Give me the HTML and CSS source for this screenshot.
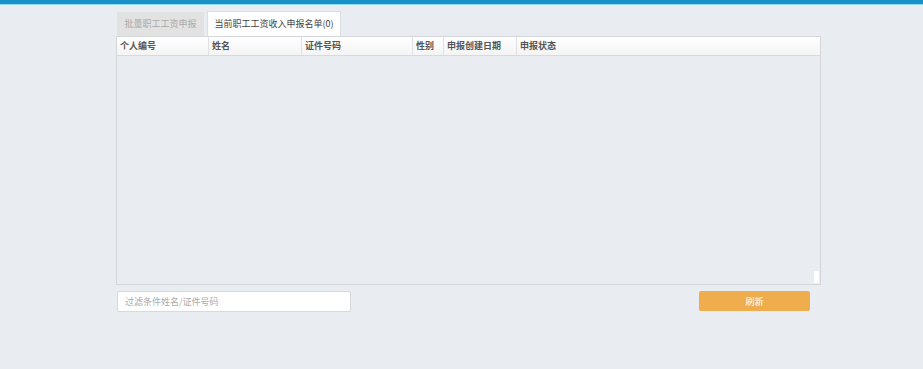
FILE: index.html
```html
<!DOCTYPE html>
<html lang="zh-CN">
<head>
  <meta charset="UTF-8" />
  <title>职工工资申报</title>
  <link rel="stylesheet" href="styles.css">
</head>
<body>
  <div class="topbar"></div>
  <div class="wrap">
    <div class="tabs">
      <div class="tab">批量职工工资申报</div>
      <div class="tab active">当前职工工资收入申报名单(0)</div>
    </div>
    <div class="grid">
      <div class="grid-head">
        <div class="col c1">个人编号</div>
        <div class="col c2">姓名</div>
        <div class="col c3">证件号码</div>
        <div class="col c4">性别</div>
        <div class="col c5">申报创建日期</div>
        <div class="col c6">申报状态</div>
      </div>
      <div class="grid-body">
        <div class="scroll-thumb"></div>
      </div>
    </div>
    <div class="footer">
      <input type="text" class="filter" placeholder="过滤条件姓名/证件号码" />
      <button class="btn">刷新</button>
    </div>
  </div>
</body>
</html>
```

FILE: styles.css
```css
body {
  margin: 0;
  background: #e9ecf0;
  font-family: "Noto Sans CJK SC", "Noto Sans", sans-serif;
  font-size: 9px;
  color: #333;
}

.topbar {
  height: 4px;
  background: #1791c6;
  border-bottom: 1px solid #8fdcf2;
}

.wrap {
  margin-left: 116px;
  width: 705px;
  padding-top: 5px;
}

.tabs {
  display: flex;
  align-items: flex-end;
  height: 26px;
}

.tab {
  width: 87px;
  height: 24px;
  margin-left: 1px;
  margin-right: 3px;
  background: #e2e2e2;
  color: #aaa;
  line-height: 24px;
  text-align: center;
}

.tab.active {
  width: 132px;
  height: 24px;
  margin-left: 0;
  line-height: 24px;
  background: #fff;
  color: #444;
  border: 1px solid #dcdfe3;
  border-bottom: none;
}

.grid {
  height: 247px;
  border: 1px solid #d3d6da;
  display: flex;
  flex-direction: column;
}

.grid-head {
  display: flex;
  height: 18px;
  background: linear-gradient(#ffffff, #f4f4f4);
  border-bottom: 1px solid #d8dadd;
  font-weight: bold;
  color: #555;
}

.col {
  line-height: 18px;
  padding-left: 3px;
  border-right: 1px solid #e0e2e5;
  box-sizing: border-box;
}

.c1 { width: 92px; }
.c2 { width: 93px; }
.c3 { width: 111px; }
.c4 { width: 31px; }
.c5 { width: 73px; }
.c6 { flex: 1; border-right: none; }

.grid-body {
  flex: 1;
  display: flex;
  justify-content: flex-end;
  align-items: flex-end;
}

.scroll-thumb {
  width: 5px;
  height: 12px;
  margin-right: 1px;
  margin-bottom: 1px;
  background: #fff;
}

.footer {
  display: flex;
  justify-content: space-between;
  align-items: flex-start;
  margin-top: 6px;
}

.filter {
  width: 234px;
  height: 21px;
  box-sizing: border-box;
  margin-left: 1px;
  border: 1px solid #d6d9dd;
  border-radius: 2px;
  padding: 0 7px;
  font-family: inherit;
  font-size: 9px;
  outline: none;
}

.filter::placeholder {
  color: #aaa;
}

.btn {
  width: 111px;
  height: 20px;
  margin-right: 11px;
  border: none;
  border-radius: 2px;
  background: #f0ad4e;
  color: #fff;
  font-family: inherit;
  font-size: 9px;
  cursor: pointer;
}
```
